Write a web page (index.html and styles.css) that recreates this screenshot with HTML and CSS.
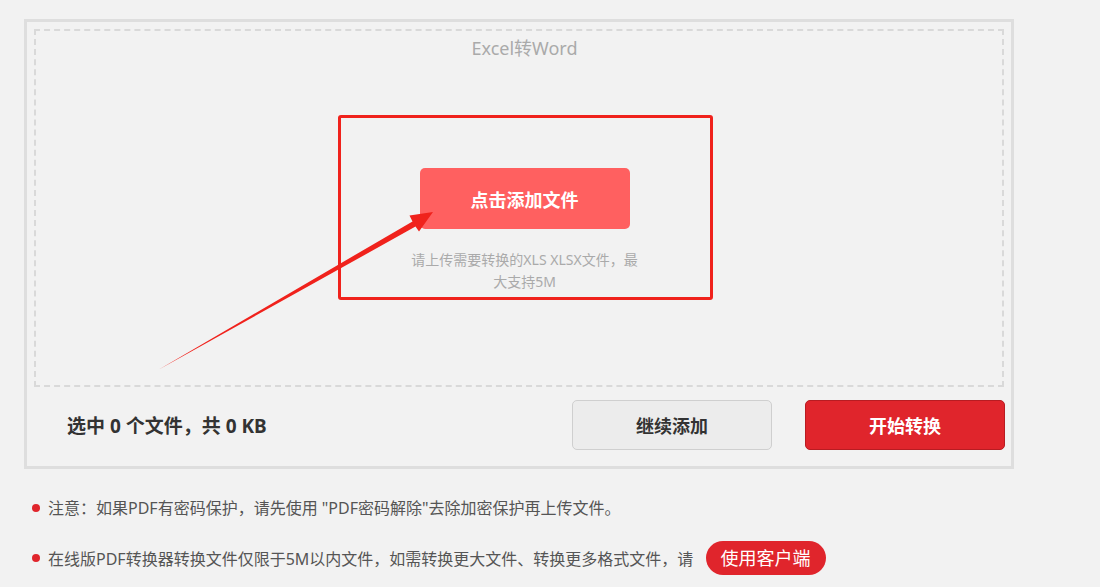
FILE: index.html
```html
<!DOCTYPE html>
<html lang="zh-CN">
<head>
    <meta charset="UTF-8">
    <meta name="viewport" content="width=device-width, initial-scale=1.0">
    <title>Excel转Word</title>
    <link rel="stylesheet" href="styles.css">
</head>
<body>
    <div class="page">
        <div class="converter">
            <div class="drop-zone">
                <h2 class="zone-title">Excel转Word</h2>
                <div class="upload">
                    <button class="add-btn">点击添加文件</button>
                    <p class="hint">请上传需要转换的XLS XLSX文件，最大支持5M</p>
                </div>
            </div>
            <div class="toolbar">
                <div class="status">选中 0 个文件，共 0 KB</div>
                <div class="toolbar-btns">
                    <button class="btn btn-gray">继续添加</button>
                    <button class="btn btn-red">开始转换</button>
                </div>
            </div>
        </div>

        <ul class="notes">
            <li>注意：如果PDF有密码保护，请先使用 "PDF密码解除"去除加密保护再上传文件。</li>
            <li>在线版PDF转换器转换文件仅限于5M以内文件，如需转换更大文件、转换更多格式文件，请 <a class="client-btn" href="#">使用客户端</a></li>
        </ul>

        <!-- 标注 -->
        <div class="mark-box"></div>
        <svg class="mark-arrow" width="1100" height="587" viewBox="0 0 1100 587">
            <polygon points="158,370 412.5,221.4 409.5,215.5 433,212 419,231.5 415.5,226.6" fill="#f0221c"/>
        </svg>
    </div>
</body>
</html>
```

FILE: styles.css
```css
body {
    margin: 0;
    background: #f2f2f2;
    font-family: "Noto Sans", "Noto Sans CJK SC", sans-serif;
    color: #333;
}

.page {
    position: relative;
    padding: 19px 0 0 24px;
    height: 568px;
}

.converter {
    width: 970px;
    border: 3px solid #dedede;
    padding: 7px 7px 0 7px;
}

.drop-zone {
    height: 354px;
    padding-left: 11px;
    border: 2px dashed #d9d9d9;
    text-align: center;
}

.zone-title {
    margin: 5px 0 0;
    font-size: 18px;
    font-weight: normal;
    color: #aaa;
    line-height: 24px;
}

.upload {
    display: flex;
    flex-direction: column;
    align-items: center;
    margin-top: 108px;
}

.add-btn {
    width: 210px;
    height: 61px;
    border: none;
    border-radius: 5px;
    background: #ff6060;
    color: #fff;
    font-family: inherit;
    font-size: 18px;
    font-weight: bold;
    cursor: pointer;
}

.hint {
    width: 240px;
    margin: 20px 0 0;
    font-size: 14px;
    line-height: 22px;
    color: #aaa;
}

.toolbar {
    display: flex;
    justify-content: space-between;
    align-items: center;
    padding: 13px 0 16px 33px;
}

.status {
    font-size: 19px;
    font-weight: bold;
    color: #333;
}

.toolbar-btns {
    display: flex;
    gap: 33px;
    margin-right: -1px;
}

.btn {
    width: 200px;
    height: 50px;
    border-radius: 5px;
    font-family: inherit;
    font-size: 18px;
    font-weight: bold;
    cursor: pointer;
}

.btn-gray {
    background: #ececec;
    border: 1px solid #cfcfcf;
    color: #333;
}

.btn-red {
    background: #e0252c;
    border: 1px solid #b81c22;
    color: #fff;
}

.notes {
    list-style: none;
    margin: 22px 0 0;
    padding: 0 0 0 8px;
}

.notes li {
    position: relative;
    padding-left: 16px;
    font-size: 16px;
    line-height: 34px;
    color: #555;
    margin-bottom: 16px;
}

.notes li::before {
    content: "";
    position: absolute;
    left: 0;
    top: 13px;
    width: 8px;
    height: 8px;
    border-radius: 50%;
    background: #e0252c;
}

.client-btn {
    display: inline-block;
    margin-left: 8px;
    padding: 0 15px;
    height: 34px;
    line-height: 34px;
    border-radius: 17px;
    background: #e0252c;
    color: #fff;
    font-size: 18px;
    text-decoration: none;
}

.mark-box {
    position: absolute;
    left: 338px;
    top: 115px;
    width: 369px;
    height: 179px;
    border: 3px solid #f0221c;
    border-radius: 3px;
}

.mark-arrow {
    position: absolute;
    left: 0;
    top: 0;
    pointer-events: none;
}
```
